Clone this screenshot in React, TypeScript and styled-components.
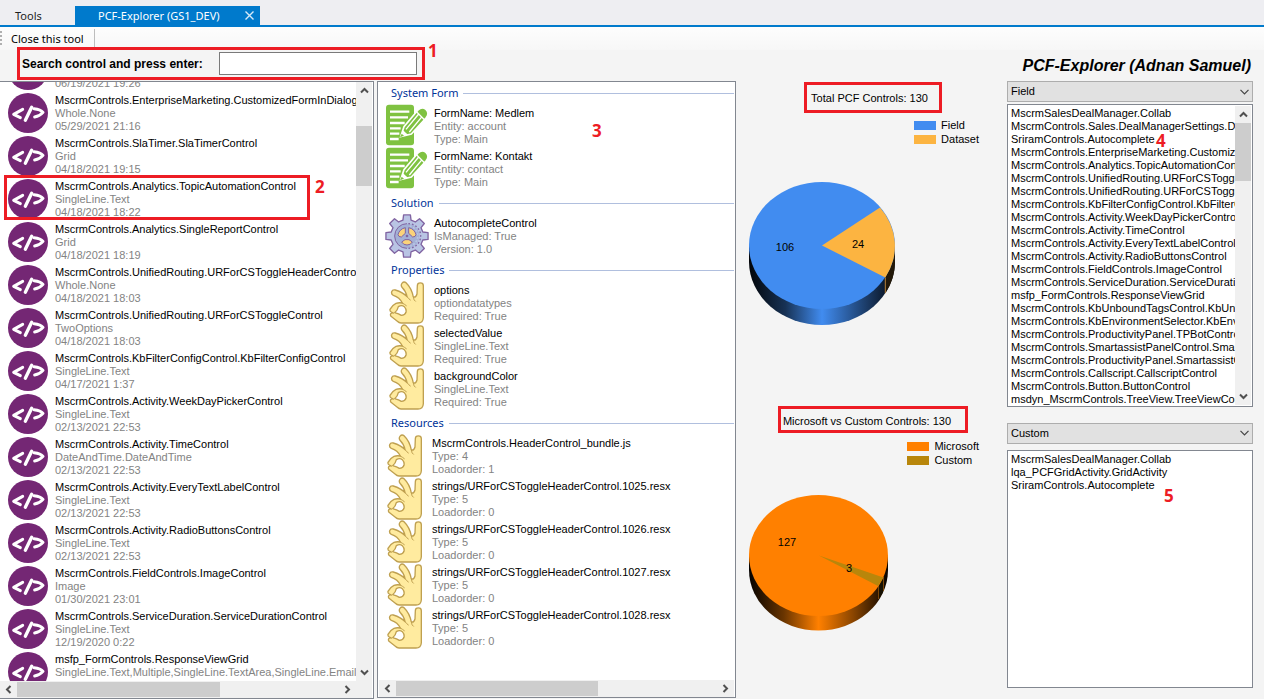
import React from "react";
import styled, { createGlobalStyle, css } from "styled-components";

const uiFont = `"Noto Sans", "Open Sans", sans-serif`;
const listFont = `"Liberation Sans", Arial, sans-serif`;
const RED = "#ed1c24";

const GlobalStyle = createGlobalStyle`
  * { box-sizing: border-box; }
  body { margin: 0; background: #f4f4f4; color: #000; font: 11px/13px ${listFont}; }
  button, input, select { font: inherit; color: inherit; }
  ul { list-style: none; margin: 0; padding: 0; }
  h1, h2 { margin: 0; font: inherit; }
`;

const Page = styled.div`
  height: 100vh;
  min-height: 480px;
  display: flex;
  flex-direction: column;
  background: #f4f4f4;
`;

const TabBar = styled.nav`
  display: flex;
  align-items: flex-end;
  height: 27px;
  flex: none;
  background: #eeeef2;
  border-bottom: 2px solid #007acc;
  font: 11px/19px ${uiFont};
`;

const Tab = styled.button<{ $active?: boolean }>`
  display: flex;
  align-items: center;
  justify-content: space-between;
  height: 19px;
  border: 0;
  padding: ${(p) => (p.$active ? "0 6px 0 23px" : "0 15px")};
  width: ${(p) => (p.$active ? "185px" : "75px")};
  background: ${(p) => (p.$active ? "#007acc" : "transparent")};
  color: ${(p) => (p.$active ? "#fff" : "#1e1e1e")};
  white-space: nowrap;
`;

const ToolStrip = styled.div`
  display: flex;
  align-items: center;
  height: 23px;
  flex: none;
  background: linear-gradient(#fdfdfd, #f7f7f7);
  font: 11px/19px ${uiFont};
`;

const Grip = styled.span`
  width: 2px;
  height: 15px;
  background: repeating-linear-gradient(#b0b0b0 0 2px, transparent 2px 4px);
`;

const ToolButton = styled.button`
  margin-left: 3px;
  padding: 0 10px 0 6px;
  border: 0;
  border-right: 1px solid #bdbdbd;
  background: none;
  white-space: nowrap;
`;

const HeaderRow = styled.header`
  display: flex;
  align-items: center;
  justify-content: space-between;
  height: 31px;
  flex: none;
  padding: 0 13px 0 17px;
`;

const SearchForm = styled.form`
  position: relative;
  display: flex;
  align-items: center;
  gap: 17px;
  height: 33px;
  margin-top: -4px;
  padding: 0 5px 0 2px;
  border: 3px solid ${RED};
`;

const SearchLabel = styled.label`
  width: 180px;
  font-weight: bold;
  font-size: 12px;
  line-height: 20px;
  white-space: nowrap;
`;

const SearchInput = styled.input`
  width: 198px;
  height: 23px;
  border: 1px solid #7a7a7a;
  background: #fff;
  padding: 2px 4px;
  outline: none;
`;

const AppTitle = styled.h1`
  font-size: 16px;
  line-height: 20px;
  font-weight: bold;
  font-style: italic;
  white-space: nowrap;
`;

const Marker = styled.span<{ $x: number; $y: number }>`
  position: absolute;
  left: ${(p) => p.$x}px;
  top: ${(p) => p.$y}px;
  z-index: 2;
  color: ${RED};
  font: bold 17px/18px "Open Sans", "Noto Sans", sans-serif;
`;

const Body = styled.main`
  flex: 1;
  min-height: 0;
  display: grid;
  grid-template-columns: minmax(0, 377fr) minmax(0, 359fr) 271px minmax(0, 246fr);
  grid-template-rows: minmax(0, 1fr);
  padding-right: 11px;
`;

const Panel = styled.section<{ $flushLeft?: boolean }>`
  position: relative;
  display: flex;
  flex-direction: column;
  min-width: 0;
  min-height: 0;
  margin: ${(p) => (p.$flushLeft ? "0 3px 0 0" : "0 0 1px")};
  border: 1px solid #828790;
  border-left-width: ${(p) => (p.$flushLeft ? 0 : 1)}px;
  background: #fff;
  padding: 0 1px 0 ${(p) => (p.$flushLeft ? 0 : 1)}px;
`;

const PanelMain = styled.div`
  flex: 1;
  min-height: 0;
  display: flex;
`;

const Clip = styled.div`
  flex: 1;
  min-width: 0;
  overflow: hidden;
`;

const ControlList = styled.ul`
  margin-top: -32px;
`;

const ListItem = styled.li<{ $inset: number }>`
  position: relative;
  display: flex;
  height: 43px;
  padding-left: ${(p) => p.$inset}px;
  white-space: nowrap;
`;

const IconSlot = styled.span<{ $width: number }>`
  flex: none;
  width: ${(p) => p.$width}px;
  svg { display: block; }
`;

const ItemText = styled.div<{ $low?: boolean }>`
  display: grid;
  grid-template-rows: 13px 13px 13px;
  padding-top: ${(p) => (p.$low ? 3 : 1)}px;
  color: #838383;
`;

const ItemName = styled.span`
  color: #000;
`;

const Selection = styled.span`
  position: absolute;
  left: 4px;
  top: -4px;
  width: 306px;
  height: 45px;
  border: 3px solid ${RED};
  z-index: 1;
`;

const Groups = styled.div`
  flex: 1;
  min-height: 0;
  margin-top: -2px;
  overflow: hidden;
`;

const GroupTitle = styled.h2`
  display: flex;
  align-items: center;
  gap: 5px;
  height: 24px;
  padding: 2px 0 0 12px;
  color: #003399;
  font: 11px/16px ${uiFont};
  &::after { content: ""; flex: 1; height: 1px; background: #b0bfde; }
`;

const Bar = styled.div<{ $vertical?: boolean }>`
  display: flex;
  flex: none;
  background: #f0f0f0;
  ${(p) => (p.$vertical ? css`flex-direction: column; width: 16px;` : css`height: 17px;`)}
`;

const BarButton = styled.button`
  flex: none;
  display: flex;
  align-items: center;
  justify-content: center;
  width: 17px;
  height: 17px;
  padding: 0;
  border: 0;
  background: none;
`;

const Track = styled.div<{ $vertical?: boolean }>`
  flex: 1;
  display: flex;
  flex-direction: ${(p) => (p.$vertical ? "column" : "row")};
`;

const Thumb = styled.div<{ $vertical?: boolean; $start: number; $size: number }>`
  background: #cdcdcd;
  ${(p) => p.$vertical
    ? css`margin-top: ${p.$start}px; height: ${p.$size}px;`
    : css`width: ${p.$size}%; height: 15px; margin-top: 1px;`}
`;

const Corner = styled.span`
  width: 16px;
`;

const Charts = styled.div`
  display: flex;
  flex-direction: column;
  min-width: 0;
`;

const ChartCard = styled.section<{ $grow: number }>`
  flex: ${(p) => p.$grow} 1 0;
  min-height: 0;
  display: flex;
  flex-direction: column;
  padding: 1px 28px 0 13px;
`;

const ChartTitle = styled.h2<{ $tall?: boolean }>`
  align-self: center;
  margin-left: 18px;
  height: ${(p) => (p.$tall ? 31 : 27)}px;
  line-height: ${(p) => (p.$tall ? 27 : 24)}px;
  padding: 0 ${(p) => (p.$tall ? 11 : 14)}px 0 ${(p) => (p.$tall ? 4 : 2)}px;
  border: 3px solid ${RED};
  white-space: nowrap;
`;

const Legend = styled.ul<{ $gap: number }>`
  align-self: flex-end;
  margin: ${(p) => p.$gap}px 0 ${(p) => (p.$gap > 5 ? 27 : 36)}px;
`;

const LegendRow = styled.li`
  display: flex;
  align-items: center;
  gap: 5px;
  height: 14px;
`;

const Swatch = styled.span<{ $color: string }>`
  width: 22px;
  height: 9px;
  background: ${(p) => p.$color};
`;

const Pie = styled.svg`
  display: block;
  flex: none;
`;

const Side = styled.aside`
  display: flex;
  flex-direction: column;
  min-width: 0;
  min-height: 0;
  padding-bottom: 11px;
`;

const SelectWrap = styled.div`
  display: grid;
  flex: none;
  align-items: center;
  height: 21px;
  select, svg { grid-area: 1 / 1; }
  svg { justify-self: end; margin-right: 4px; pointer-events: none; }
`;

const Select = styled.select`
  appearance: none;
  width: 100%;
  height: 21px;
  padding: 0 20px 0 3px;
  border: 1px solid #adadad;
  border-radius: 0;
  background: #e1e1e1;
  outline: none;
`;

const SideList = styled.div<{ $grow: number; $top: number; $bottom: number }>`
  position: relative;
  display: flex;
  flex: ${(p) => p.$grow} 1 0;
  min-height: 0;
  margin: ${(p) => `${p.$top}px 0 ${p.$bottom}px`};
  padding: 1px;
  border: 1px solid #828790;
  background: #fff;
`;

const Names = styled.ul`
  flex: 1;
  min-width: 0;
  overflow: hidden;
  padding: 1px 0 0 2px;
  white-space: nowrap;
`;

type Dir = "up" | "down" | "left" | "right";
const turn: Record<Dir, number> = { up: 0, right: 90, down: 180, left: 270 };

const Arrow = ({ dir }: { dir: Dir }) => (
  <BarButton type="button" aria-label={`Scroll ${dir}`}>
    <svg width="9" height="9" viewBox="0 0 9 9">
      <path d="M1 6.5 4.5 3 8 6.5" transform={`rotate(${turn[dir]} 4.5 4.5)`} fill="none" stroke="#505050" strokeWidth="2" />
    </svg>
  </BarButton>
);

const VScroll = ({ start, size }: { start: number; size: number }) => (
  <Bar $vertical>
    <Arrow dir="up" />
    <Track $vertical><Thumb $vertical $start={start} $size={size} /></Track>
    <Arrow dir="down" />
  </Bar>
);

const HScroll = ({ size, corner }: { size: number; corner?: boolean }) => (
  <Bar>
    <Arrow dir="left" />
    <Track><Thumb $start={0} $size={size} /></Track>
    <Arrow dir="right" />
    {corner && <Corner />}
  </Bar>
);

const CodeIcon = () => (
  <svg width="40" height="40" viewBox="0 0 120 120">
    <circle cx="60" cy="60" r="60" fill="#742774" />
    <g fill="none" stroke="#fff" strokeLinecap="round" strokeLinejoin="round">
      <path d="M44 49 L17 64 L37 74" strokeWidth="9" />
      <path d="M71 43 L52 82" strokeWidth="10" />
      <path d="M78 47 Q98 49 105 58 Q96 69 80 72" strokeWidth="9" />
    </g>
  </svg>
);

const FormIcon = () => (
  <svg width="42" height="42" viewBox="0 0 126 126">
    <rect x="0" y="2" width="84" height="122" rx="9" fill="#7fc241" />
    <path d="M12 23H70 M12 40H66 M12 57H56 M12 73H44 M12 89H40 M12 105H38" stroke="#fff" strokeWidth="7" />
    <path d="M44 98 L54 68 L96 18 Q108 6 120 16 Q132 28 120 42 L76 90 Z" fill="#7fc241" stroke="#fff" strokeWidth="5" />
    <path d="M60 76 L98 30 M70 84 L108 38 M90 22 L116 48" stroke="#fff" strokeWidth="4" />
    <path d="M44 98 L50 78 L66 92 Z" fill="#fff" />
    <path d="M42 100 L47 89 L54 95 Z" fill="#7fc241" />
  </svg>
);

const gearPath = (() => {
  const pts: string[] = [];
  for (let i = 0; i < 8; i++) {
    const base = (i * Math.PI) / 4 - Math.PI / 2;
    [[-0.25, 49], [-0.16, 64], [0.16, 64], [0.25, 49]].forEach(([a, r]) => {
      pts.push(`${(66 + r * Math.cos(base + a)).toFixed(1)} ${(66 + r * Math.sin(base + a)).toFixed(1)}`);
    });
  }
  return `M${pts.join("L")}Z`;
})();

const GearIcon = () => (
  <svg width="44" height="44" viewBox="0 0 132 132">
    <path d={gearPath} fill="#b9c4e4" stroke="#8064a2" strokeWidth="4" strokeLinejoin="round" />
    <circle cx="66" cy="66" r="37" fill="#a3b0d6" />
    <path d="M66 29 A37 37 0 0 0 66 103" fill="none" stroke="#8064a2" strokeWidth="3" />
    <path d="M70 29 A37 37 0 0 1 70 103" fill="none" stroke="#8064a2" strokeWidth="4" strokeDasharray="5 6" />
    <path d="M74 36 A31 31 0 0 1 76 96" fill="none" stroke="#b9c4e4" strokeWidth="5" strokeDasharray="6 5" />
    <g fill="#fbd37a" stroke="#8064a2" strokeWidth="3" strokeLinejoin="round">
      <path d="M61 41 V58 L49 69 Q40 69 39 62 Q43 45 61 41Z" />
      <path d="M71 41 V58 L83 69 Q92 69 93 62 Q89 45 71 41Z" />
      <path d="M50 84 L60 77 H72 L82 84 Q77 93 66 93 Q55 93 50 84Z" />
    </g>
    <circle cx="66" cy="66" r="4" fill="#8064a2" />
  </svg>
);

const HandIcon = () => (
  <svg width="35" height="43" viewBox="40 64 105 129">
    <path
      fillRule="evenodd"
      fill="#ffeb9f"
      stroke="#bfa050"
      strokeWidth="4"
      strokeLinejoin="round"
      d="M125 78 C125 67 143 67 143 78 V174 Q142 190 127 190 H76 Q70 190 65 185 L46 170 C42 164 46 158 53 160 L47 157 Q42 155 43 149 Q50 136 61 131 Q70 128 80 130 Q72 113 53 107 C44 103 47 88 59 91 Q82 98 94 111 Q91 95 79 83 C73 74 82 63 91 69 Q108 85 113 112 Q121 114 124 103 Z M68 141 Q78 135 86 141 Q93 149 91 158 Q88 167 77 167 Q70 162 57 159 Q66 152 68 141 Z"
    />
    <path d="M94 111 Q99 118 104 121 M80 130 Q87 134 92 138 M113 112 Q114 123 119 125" fill="none" stroke="#bfa050" strokeWidth="3" strokeLinecap="round" />
  </svg>
);

const Chevron = () => (
  <svg width="9" height="6" viewBox="0 0 9 6"><path d="M.5 .8 4.5 4.8 8.5 .8" fill="none" stroke="#444" strokeWidth="1.2" /></svg>
);

const controls: [string, string, string][] = [
  ["", "", "06/19/2021 19:26"],
  ["MscrmControls.EnterpriseMarketing.CustomizedFormInDialog", "Whole.None", "05/29/2021 21:16"],
  ["MscrmControls.SlaTimer.SlaTimerControl", "Grid", "04/18/2021 19:15"],
  ["MscrmControls.Analytics.TopicAutomationControl", "SingleLine.Text", "04/18/2021 18:22"],
  ["MscrmControls.Analytics.SingleReportControl", "Grid", "04/18/2021 18:19"],
  ["MscrmControls.UnifiedRouting.URForCSToggleHeaderControl", "Whole.None", "04/18/2021 18:03"],
  ["MscrmControls.UnifiedRouting.URForCSToggleControl", "TwoOptions", "04/18/2021 18:03"],
  ["MscrmControls.KbFilterConfigControl.KbFilterConfigControl", "SingleLine.Text", "04/17/2021 1:37"],
  ["MscrmControls.Activity.WeekDayPickerControl", "SingleLine.Text", "02/13/2021 22:53"],
  ["MscrmControls.Activity.TimeControl", "DateAndTime.DateAndTime", "02/13/2021 22:53"],
  ["MscrmControls.Activity.EveryTextLabelControl", "SingleLine.Text", "02/13/2021 22:53"],
  ["MscrmControls.Activity.RadioButtonsControl", "SingleLine.Text", "02/13/2021 22:53"],
  ["MscrmControls.FieldControls.ImageControl", "Image", "01/30/2021 23:01"],
  ["MscrmControls.ServiceDuration.ServiceDurationControl", "SingleLine.Text", "12/19/2020 0:22"],
  ["msfp_FormControls.ResponseViewGrid", "SingleLine.Text,Multiple,SingleLine.TextArea,SingleLine.Email,SingleLine.Phone", ""],
];

const groups: { title: string; inset: number; iconWidth: number; icon: React.FC; items: string[][] }[] = [
  { title: "System Form", inset: 7, iconWidth: 48, icon: FormIcon, items: [
    ["FormName: Medlem", "Entity: account", "Type: Main"],
    ["FormName: Kontakt", "Entity: contact", "Type: Main"],
  ] },
  { title: "Solution", inset: 6, iconWidth: 49, icon: GearIcon, items: [["AutocompleteControl", "IsManaged: True", "Version: 1.0"]] },
  { title: "Properties", inset: 10, iconWidth: 45, icon: HandIcon, items: [
    ["options", "optiondatatypes", "Required: True"],
    ["selectedValue", "SingleLine.Text", "Required: True"],
    ["backgroundColor", "SingleLine.Text", "Required: True"],
  ] },
  { title: "Resources", inset: 8, iconWidth: 45, icon: HandIcon, items: [
    ["MscrmControls.HeaderControl_bundle.js", "Type: 4", "Loadorder: 1"],
    ["strings/URForCSToggleHeaderControl.1025.resx", "Type: 5", "Loadorder: 0"],
    ["strings/URForCSToggleHeaderControl.1026.resx", "Type: 5", "Loadorder: 0"],
    ["strings/URForCSToggleHeaderControl.1027.resx", "Type: 5", "Loadorder: 0"],
    ["strings/URForCSToggleHeaderControl.1028.resx", "Type: 5", "Loadorder: 0"],
  ] },
];

const fieldNames = [
  "MscrmSalesDealManager.Collab",
  "MscrmControls.Sales.DealManagerSettings.DealManagerSettings",
  "SriramControls.Autocomplete",
  "MscrmControls.EnterpriseMarketing.CustomizedFormInDialog",
  "MscrmControls.Analytics.TopicAutomationControl",
  "MscrmControls.UnifiedRouting.URForCSToggleHeaderControl",
  "MscrmControls.UnifiedRouting.URForCSToggleControl",
  "MscrmControls.KbFilterConfigControl.KbFilterConfigControl",
  "MscrmControls.Activity.WeekDayPickerControl",
  "MscrmControls.Activity.TimeControl",
  "MscrmControls.Activity.EveryTextLabelControl",
  "MscrmControls.Activity.RadioButtonsControl",
  "MscrmControls.FieldControls.ImageControl",
  "MscrmControls.ServiceDuration.ServiceDurationControl",
  "msfp_FormControls.ResponseViewGrid",
  "MscrmControls.KbUnboundTagsControl.KbUnboundTagsControl",
  "MscrmControls.KbEnvironmentSelector.KbEnvironmentSelector",
  "MscrmControls.ProductivityPanel.TPBotControl",
  "MscrmControls.SmartassistPanelControl.SmartassistPanelControl",
  "MscrmControls.ProductivityPanel.SmartassistControl",
  "MscrmControls.Callscript.CallscriptControl",
  "MscrmControls.Button.ButtonControl",
  "msdyn_MscrmControls.TreeView.TreeViewControl",
];

const customNames = ["MscrmSalesDealManager.Collab", "lqa_PCFGridActivity.GridActivity", "SriramControls.Autocomplete"];

export default function App() {
  return (
    <>
      <GlobalStyle />
      <Page>
        <TabBar>
          <Tab type="button">Tools</Tab>
          <Tab type="button" $active>
            PCF-Explorer (GS1_DEV)
            <svg width="9" height="9" viewBox="0 0 9 9"><path d="M.5 .5 8.5 8.5 M8.5 .5 .5 8.5" stroke="#d6eaf8" strokeWidth="1.4" /></svg>
          </Tab>
        </TabBar>
        <ToolStrip>
          <Grip />
          <ToolButton type="button">Close this tool</ToolButton>
        </ToolStrip>
        <HeaderRow>
          <SearchForm onSubmit={(e) => e.preventDefault()}>
            <SearchLabel htmlFor="search">Search control and press enter:</SearchLabel>
            <SearchInput id="search" type="text" />
            <Marker $x={408} $y={-8}>1</Marker>
          </SearchForm>
          <AppTitle>PCF-Explorer (Adnan Samuel)</AppTitle>
        </HeaderRow>
        <Body>
          <Panel $flushLeft>
            <PanelMain>
              <Clip>
                <ControlList>
                  {controls.map(([name, type, date], i) => (
                    <ListItem key={i} $inset={8}>
                      <IconSlot $width={47}><CodeIcon /></IconSlot>
                      <ItemText>
                        <ItemName>{name}</ItemName>
                        <span>{type}</span>
                        <span>{date}</span>
                      </ItemText>
                      {i === 3 && <Selection />}
                      {i === 3 && <Marker $x={315} $y={-1}>2</Marker>}
                    </ListItem>
                  ))}
                </ControlList>
              </Clip>
              <VScroll start={27} size={60} />
            </PanelMain>
            <HScroll size={63} corner />
          </Panel>
          <Panel>
            <Groups>
              {groups.map(({ title, inset, iconWidth, icon: Icon, items }) => (
                <section key={title}>
                  <GroupTitle>{title}</GroupTitle>
                  <ul>
                    {items.map(([name, a, b]) => (
                      <ListItem key={name} $inset={inset}>
                        <IconSlot $width={iconWidth}><Icon /></IconSlot>
                        <ItemText $low>
                          <ItemName>{name}</ItemName>
                          <span>{a}</span>
                          <span>{b}</span>
                        </ItemText>
                      </ListItem>
                    ))}
                  </ul>
                </section>
              ))}
            </Groups>
            <HScroll size={63} />
            <Marker $x={214} $y={40}>3</Marker>
          </Panel>
          <Charts>
            <ChartCard $grow={324}>
              <ChartTitle $tall>Total PCF Controls: 130</ChartTitle>
              <Legend $gap={5}>
                <LegendRow><Swatch $color="#418cf0" />Field</LegendRow>
                <LegendRow><Swatch $color="#fcb441" />Dataset</LegendRow>
              </Legend>
              <Pie width="147" height="144" viewBox="0 0 147 144">
                <defs>
                  <linearGradient id="blueRim">
                    <stop offset="0" stopColor="#020509" />
                    <stop offset=".25" stopColor="#173255" />
                    <stop offset=".5" stopColor="#418cf0" />
                    <stop offset=".75" stopColor="#224a80" />
                    <stop offset=".92" stopColor="#0e1e34" />
                    <stop offset="1" stopColor="#050a12" />
                  </linearGradient>
                </defs>
                <path d="M0 63.5 V79.5 A73 63.5 0 0 0 146 79.5 V63.5Z" fill="url(#blueRim)" />
                <path d="M136.3 95.5 V111.5 A73 63.5 0 0 0 146 79.5 V63.5Z" fill="#231909" />
                <path d="M136.3 95.5 V111" stroke="#b9823a" />
                <ellipse cx="73" cy="63.5" rx="73" ry="63.5" fill="#418cf0" />
                <path d="M73 63.5 L131 25.5 A73 63.5 0 0 1 136.3 95.5Z" fill="#fcb441" />
                <text x="36" y="69" textAnchor="middle">106</text>
                <text x="109" y="66" textAnchor="middle">24</text>
              </Pie>
            </ChartCard>
            <ChartCard $grow={294}>
              <ChartTitle>Microsoft vs Custom Controls: 130</ChartTitle>
              <Legend $gap={7}>
                <LegendRow><Swatch $color="#ff8000" />Microsoft</LegendRow>
                <LegendRow><Swatch $color="#b8860b" />Custom</LegendRow>
              </Legend>
              <Pie width="140" height="136" viewBox="0 0 140 136">
                <defs>
                  <linearGradient id="orangeRim">
                    <stop offset="0" stopColor="#050200" />
                    <stop offset=".25" stopColor="#6a3500" />
                    <stop offset=".5" stopColor="#ff8000" />
                    <stop offset=".75" stopColor="#8a4500" />
                    <stop offset=".93" stopColor="#2d1600" />
                    <stop offset="1" stopColor="#050200" />
                  </linearGradient>
                </defs>
                <path d="M0 60.5 V75 A69.5 60.5 0 0 0 139 75 V60.5Z" fill="url(#orangeRim)" />
                <path d="M129 90 V105 L134 97 V82Z" fill="#171102" />
                <path d="M129.5 90 V104 M134.5 82 V96" stroke="#7a4608" />
                <ellipse cx="69.5" cy="60.5" rx="69.5" ry="60.5" fill="#ff8000" />
                <path d="M70 60.5 L134.4 82.5 L129 91Z" fill="#b8860b" />
                <text x="38" y="51" textAnchor="middle">127</text>
                <text x="100" y="77" textAnchor="middle">3</text>
              </Pie>
            </ChartCard>
          </Charts>
          <Side>
            <SelectWrap>
              <Select aria-label="Control type" defaultValue="Field"><option>Field</option><option>Dataset</option></Select>
              <Chevron />
            </SelectWrap>
            <SideList $grow={303} $top={2} $bottom={16}>
              <Names>{fieldNames.map((n) => <li key={n}>{n}</li>)}</Names>
              <VScroll start={0} size={58} />
              <Marker $x={148} $y={27}>4</Marker>
            </SideList>
            <SelectWrap>
              <Select aria-label="Publisher" defaultValue="Custom"><option>Custom</option><option>Microsoft</option></Select>
              <Chevron />
            </SelectWrap>
            <SideList $grow={238} $top={6} $bottom={0}>
              <Names>{customNames.map((n) => <li key={n}>{n}</li>)}</Names>
              <Marker $x={156} $y={36}>5</Marker>
            </SideList>
          </Side>
        </Body>
      </Page>
    </>
  );
}
